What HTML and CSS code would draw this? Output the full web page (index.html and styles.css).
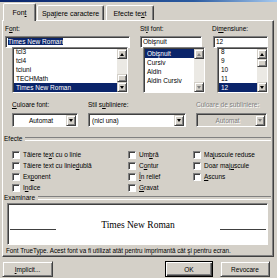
FILE: index.html
```html
<!DOCTYPE html>
<html lang="ro">
<head>
  <meta charset="UTF-8">
  <title>Font</title>
  <link rel="stylesheet" href="styles.css">
</head>
<body>

  <div class="titlebar"></div>

  <div class="tabs">
    <div class="tab active t-font">Fon<u>t</u></div>
    <div class="tab t-space">Spa<u>ţ</u>iere caractere</div>
    <div class="tab t-fx">Efecte te<u>x</u>t</div>
  </div>

  <div class="panel">

    <div class="fontrow">
      <div class="col col-font">
        <label>F<u>o</u>nt:</label>
        <div class="edit"><span class="hl">Times New Roman</span></div>
        <div class="list">
          <ul class="shift">
            <li>tcl3</li>
            <li>tcl4</li>
            <li>tciuni</li>
            <li>TECHMath</li>
            <li class="sel">Times New Roman</li>
          </ul>
          <div class="scroll">
            <div class="sbtn up"></div>
            <div class="track end"><div class="thumb"></div></div>
            <div class="sbtn down"></div>
          </div>
        </div>
      </div>

      <div class="col col-style">
        <label>St<u>i</u>l font:</label>
        <div class="edit">Obişnuit</div>
        <div class="list">
          <ul>
            <li class="sel">Obişnuit</li>
            <li>Cursiv</li>
            <li>Aldin</li>
            <li>Aldin Cursiv</li>
          </ul>
          <div class="scroll off">
            <div class="sbtn up"></div>
            <div class="track"></div>
            <div class="sbtn down"></div>
          </div>
        </div>
      </div>

      <div class="col col-size">
        <label>Di<u>m</u>ensiune:</label>
        <div class="edit">12</div>
        <div class="list">
          <ul class="shift">
            <li>8</li>
            <li>9</li>
            <li>10</li>
            <li>11</li>
            <li class="sel">12</li>
          </ul>
          <div class="scroll">
            <div class="sbtn up"></div>
            <div class="track"><div class="thumb"></div></div>
            <div class="sbtn down"></div>
          </div>
        </div>
      </div>
    </div>

    <div class="droprow">
      <div class="dcol d1">
        <label><u>C</u>uloare font:</label>
        <div class="combo center"><span>Automat</span><div class="drop"></div></div>
      </div>
      <div class="dcol d2">
        <label>Stil s<u>u</u>bliniere:</label>
        <div class="combo"><span>(nici una)</span><div class="drop"></div></div>
      </div>
      <div class="dcol d3">
        <label class="dis">Culoare de subliniere:</label>
        <div class="combo center disabled"><span>Automat</span><div class="drop"></div></div>
      </div>
    </div>

    <div class="group"><span>Efecte</span></div>
    <div class="effects">
      <div class="chk"><i></i>Tăiere te<u>x</u>t cu o linie</div>
      <div class="chk"><i></i>Um<u>b</u>ră</div>
      <div class="chk"><i></i>Ma<u>j</u>uscule reduse</div>

      <div class="chk"><i></i>Tăiere text cu linie <u>d</u>ublă</div>
      <div class="chk"><i></i>C<u>o</u>ntur</div>
      <div class="chk"><i></i>Doar maj<u>u</u>scule</div>

      <div class="chk"><i></i>Ex<u>p</u>onent</div>
      <div class="chk"><i></i><u>Î</u>n relief</div>
      <div class="chk"><i></i><u>A</u>scuns</div>

      <div class="chk"><i></i>I<u>n</u>dice</div>
      <div class="chk"><i></i><u>G</u>ravat</div>
    </div>

    <div class="group"><span>Examinare</span></div>
    <div class="preview">
      <span class="ln"></span>
      <span class="sample">Times New Roman</span>
      <span class="ln"></span>
    </div>
    <p class="note">Font TrueType. Acest font va fi utilizat atât pentru imprimantă cât şi pentru ecran.</p>

  </div>

  <div class="buttons">
    <button type="button" class="btn b-def"><u>I</u>mplicit...</button>
    <button type="button" class="btn b-ok">OK</button>
    <button type="button" class="btn b-cancel">Revocare</button>
  </div>

</body>
</html>
```

FILE: styles.css
```css
* {
  box-sizing: border-box;
}

body {
  margin: 0;
  width: 277px;
  height: 278px;
  overflow: hidden;
  background: #d4d0c8;
  font-family: 'Liberation Sans', Arial, sans-serif;
  font-size: 6.5px;
  color: #000;
}

.titlebar {
  height: 2px;
  background: linear-gradient(to right, #0a246a, #2a5aa0 70%, #a6caf0);
}

/* tabs */

.tabs {
  display: flex;
  align-items: flex-end;
  height: 18px;
  padding-left: 3px;
}

.tab {
  height: 15px;
  display: flex;
  align-items: center;
  justify-content: center;
  font-size: 7px;
  border: 1px solid;
  border-bottom: 0;
  border-color: #fff #404040 transparent #fff;
  border-radius: 2px 2px 0 0;
  box-shadow: inset -1px 0 #808080;
}

.tab.active {
  height: 18px;
  margin-bottom: -1px;
  background: #d4d0c8;
  position: relative;
  z-index: 1;
}

.t-font {
  width: 33px;
}

.t-space {
  width: 67px;
  margin-left: 1px;
}

.t-fx {
  width: 48px;
  margin-left: 2px;
}

/* panel */

.panel {
  margin-left: 2px;
  width: 272px;
  height: 237px;
  border: 1px solid;
  border-color: #fff #404040 #404040 #fff;
  box-shadow: inset -1px -1px #808080;
  padding: 3px 0 0 2px;
}

label {
  display: block;
  height: 9px;
  line-height: 9px;
  white-space: nowrap;
}

label.dis {
  color: #808080;
  text-shadow: 1px 1px #fff;
}

.edit, .list, .combo, .preview {
  background: #fff;
  border: 1px solid;
  border-color: #808080 #fff #fff #808080;
  box-shadow: inset 1px 1px #404040;
}

.fontrow {
  display: flex;
}

.col label {
  margin-bottom: 3px;
}

.col-font {
  width: 125px;
  margin-right: 10px;
}

.col-style {
  width: 65px;
  margin-right: 7px;
}

.col-size {
  width: 56px;
}

.edit {
  height: 12px;
  line-height: 10px;
  padding-left: 2px;
  white-space: nowrap;
}

.hl {
  background: #0a246a;
  color: #fff;
}

.col-style .edit {
  width: 62px;
}

.col-size .edit {
  margin-left: 1px;
}

.list {
  height: 46px;
  margin-top: -1px;
  display: flex;
  overflow: hidden;
  padding: 1px 0 0 1px;
}

.col-font .list {
  margin: -1px 2px 0 7px;
}

.col-style .list {
  margin-left: 3px;
}

.col-size .list {
  margin-left: 5px;
}

.list ul {
  flex: 1;
  margin: 0;
  padding: 0;
  list-style: none;
  overflow: hidden;
}

.list ul.shift {
  margin-top: -2px;
}

.list li {
  height: 9px;
  line-height: 9px;
  padding-left: 2px;
  white-space: nowrap;
}

.list li.sel {
  background: #0a246a;
  color: #fff;
}

/* scrollbars */

.scroll {
  width: 10px;
  display: flex;
  flex-direction: column;
}

.sbtn, .thumb, .drop, .btn {
  background: #d4d0c8;
  border: 1px solid;
  border-color: #d4d0c8 #404040 #404040 #d4d0c8;
  box-shadow: inset 1px 1px #fff, inset -1px -1px #808080;
}

.sbtn {
  height: 10px;
  display: flex;
  align-items: center;
  justify-content: center;
}

.sbtn::after, .drop::after {
  content: '';
  border-left: 2.5px solid transparent;
  border-right: 2.5px solid transparent;
}

.sbtn.up::after {
  border-bottom: 3px solid #000;
}

.sbtn.down::after, .drop::after {
  border-top: 3px solid #000;
}

.scroll.off .sbtn.up::after {
  border-bottom-color: #808080;
}

.scroll.off .sbtn.down::after {
  border-top-color: #808080;
}

.track {
  flex: 1;
  background: #ebe9e4;
  display: flex;
  flex-direction: column;
}

.track.end {
  justify-content: flex-end;
}

.thumb {
  height: 8px;
}

/* dropdowns */

.droprow {
  display: flex;
  margin: 7px 0 0 7px;
}

.dcol label {
  margin-bottom: 4px;
}

.d1 {
  width: 66px;
  margin-right: 10px;
}

.d2 {
  width: 98px;
  margin-right: 10px;
}

.d3 {
  width: 71px;
}

.combo {
  height: 14px;
  display: flex;
  align-items: center;
  padding: 1px 1px 1px 3px;
}

.combo span {
  flex: 1;
  white-space: nowrap;
}

.combo.center span {
  text-align: center;
}

.drop {
  width: 10px;
  height: 11px;
  display: flex;
  align-items: center;
  justify-content: center;
}

.combo.disabled {
  background: #d4d0c8;
}

.combo.disabled span {
  color: #808080;
  text-shadow: 1px 1px #fff;
}

.combo.disabled .drop::after {
  border-top-color: #808080;
}

/* group headers */

.group {
  display: flex;
  align-items: center;
  height: 9px;
  margin: 7px 2px 0 -1px;
}

.group::after {
  content: '';
  flex: 1;
  height: 2px;
  margin-left: 3px;
  border-top: 1px solid #808080;
  border-bottom: 1px solid #fff;
}

/* checkboxes */

.effects {
  display: grid;
  grid-template-columns: 116px 65px 1fr;
  grid-auto-rows: 11px;
  margin-top: 6px;
  padding-left: 7px;
}

.chk {
  display: flex;
  align-items: center;
  white-space: nowrap;
}

.chk i {
  width: 8px;
  height: 8px;
  margin-right: 3px;
  background: #fff;
  border: 1px solid;
  border-color: #808080 #fff #fff #808080;
  box-shadow: inset 1px 1px #404040;
}

.effects + .group {
  margin-top: 0;
}

/* preview */

.preview {
  width: 261px;
  height: 42px;
  margin: 1px 0 0 2px;
  padding: 0 1px 0 2px;
  display: flex;
  align-items: center;
  justify-content: space-between;
}

.preview .ln {
  width: 46px;
  height: 1px;
  margin-top: 11px;
  background: #404040;
}

.sample {
  margin-top: 2px;
  font-family: 'Liberation Serif', 'Times New Roman', serif;
  font-size: 9.5px;
}

.note {
  margin: 2px 0 0 1px;
  font-size: 6.3px;
  line-height: 8px;
  white-space: nowrap;
}

/* buttons */

.buttons {
  display: flex;
  padding: 4px 0 0 2px;
}

.btn {
  height: 16px;
  padding: 0;
  font-family: inherit;
  font-size: 6.5px;
  color: #000;
}

.b-def {
  width: 51px;
}

.b-ok {
  width: 48px;
  margin-left: auto;
  border-color: #000;
  box-shadow: inset 1px 1px #fff, inset -1px -1px #404040, inset -2px -2px #808080;
}

.b-cancel {
  width: 50px;
  margin: 0 7px 0 7px;
}
```
